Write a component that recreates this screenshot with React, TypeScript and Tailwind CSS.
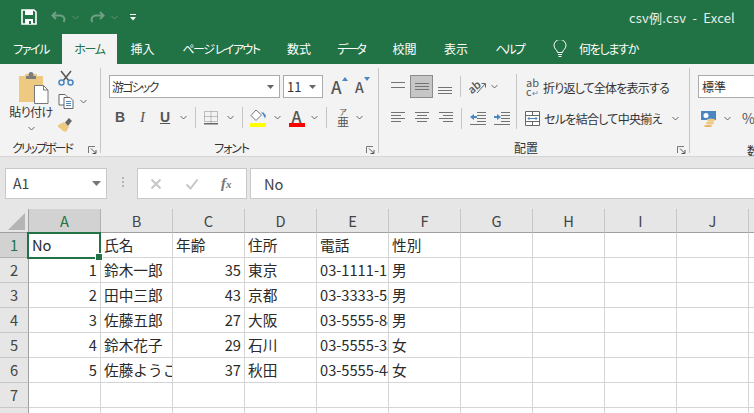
import React from "react";

const G = "#737373";
const B = "#4a86c0";

function Chev({ color = "#666", className = "" }: { color?: string; className?: string }) {
  return (
    <svg width="7" height="5" viewBox="0 0 7 5" className={className}>
      <path d="M.5 1 3.5 4 6.5 1" fill="none" stroke={color} strokeWidth="1" />
    </svg>
  );
}

function Launcher() {
  return (
    <svg width="9" height="8" viewBox="0 0 9 8">
      <path d="M.5 7V.5H7" fill="none" stroke="#777" />
      <path d="M3 2.5 7.5 7M8 4v3.5H4.5" fill="none" stroke="#555" />
    </svg>
  );
}

function Lines({ ys, xs }: { ys: number[]; xs: [number, number][] }) {
  return (
    <svg width="16" height="16" viewBox="0 0 16 16">
      {ys.map((y, i) => (
        <rect key={i} x={xs[i][0]} y={y} width={xs[i][1] - xs[i][0]} height="1" fill={G} />
      ))}
    </svg>
  );
}

function Sep({ className = "" }: { className?: string }) {
  return <div className={`w-px bg-[#c6c6c6] ${className}`} />;
}

function Group({ label, width, labelClass, children }: { label: string; width: string; labelClass: string; children: React.ReactNode }) {
  return (
    <div className={`${width} shrink-0 h-[85px] mt-[4px] flex flex-col border-r border-[#c6c6c6]`}>
      <div className="flex-1 min-h-0">{children}</div>
      <div className={`relative h-[17px] pt-[6px] flex items-center ${labelClass} text-[12px] text-[#333]`}>
        {label}
        <span className="absolute right-[3px] top-[10px] flex">
          <Launcher />
        </span>
      </div>
    </div>
  );
}

const tabs: [string, string, string][] = [
  ["ファイル", "w-[62px]", "tracking-[-1.5px]"],
  ["ホーム", "w-[55px]", "tracking-[-1.3px]"],
  ["挿入", "w-[51px]", ""],
  ["ページ レイアウト", "w-[106px]", "tracking-[-1.5px]"],
  ["数式", "w-[50px]", ""],
  ["データ", "w-[54px]", "tracking-[-2px]"],
  ["校閲", "w-[53px]", ""],
  ["表示", "w-[50px]", ""],
  ["ヘルプ", "w-[57px]", "tracking-[-2px]"],
];

const cols = ["A", "B", "C", "D", "E", "F", "G", "H", "I", "J", "K"];
const rows: (string | number)[][] = [
  ["No", "氏名", "年齢", "住所", "電話", "性別"],
  [1, "鈴木一郎", 35, "東京", "03-1111-1111", "男"],
  [2, "田中三郎", 43, "京都", "03-3333-5555", "男"],
  [3, "佐藤五郎", 27, "大阪", "03-5555-8888", "男"],
  [4, "鈴木花子", 29, "石川", "03-5555-3333", "女"],
  [5, "佐藤ようこ", 37, "秋田", "03-5555-4444", "女"],
  [],
  [],
];

export default function App() {
  return (
    <div className="w-[754px] h-[413px] overflow-hidden bg-white text-[12px] font-['Noto_Sans_CJK_JP','Noto_Sans',sans-serif] [font-feature-settings:'palt']">
      {/* Title bar */}
      <div className="h-[34px] bg-[#217346] flex items-center text-[#e6efe9]">
        <svg width="16" height="16" viewBox="0 0 16 16" className="ml-[21px]">
          <path d="M1 1h12l2 2v12H1z" fill="none" stroke="#fff" strokeWidth="1.6" />
          <rect x="4" y="1" width="8" height="5" fill="#fff" />
          <rect x="4" y="10" width="8" height="5" fill="#fff" />
          <rect x="8" y="12" width="2" height="3" fill="#217346" />
        </svg>
        <svg width="15" height="13" viewBox="0 0 15 13" className="ml-[14px]">
          <path d="M5 1 1.5 4.5 5 8M2 4.5h7a4 4 0 0 1 3.5 6.5" fill="none" stroke="#6f9f84" strokeWidth="2" />
        </svg>
        <Chev color="#5f9578" className="ml-[6px]" />
        <svg width="15" height="13" viewBox="0 0 15 13" className="ml-[11px]">
          <path d="M10 1l3.5 3.5L10 8M13 4.5H6A4 4 0 0 0 2.500 11" fill="none" stroke="#6f9f84" strokeWidth="2" />
        </svg>
        <Chev color="#5f9578" className="ml-[6px]" />
        <svg width="6" height="7" viewBox="0 0 6 7" className="ml-[12px]">
          <rect y="0" width="6" height="1" fill="#fff" />
          <path d="M0 3h6L3 6.500z" fill="#fff" />
        </svg>
        <span className="ml-auto mr-[19px] text-[13px] tracking-[0.2px] whitespace-pre leading-none">csv例.csv  -  Excel</span>
      </div>

      {/* Tabs */}
      <div className="h-[30px] bg-[#217346] flex items-stretch text-white">
        {tabs.map(([t, w, track]) => (
          <div key={t} className={`${w} ${track} shrink-0 flex items-center justify-center whitespace-pre ${t === "ホーム" ? "bg-[#f3f3f3] text-[#217346]" : ""}`}>
            {t}
          </div>
        ))}
        <div className="ml-[15px] flex items-center">
          <svg width="14" height="18" viewBox="0 0 14 18">
            <path d="M4.500 12.500C4.500 10 1 9 1 5.500a6 6 0 0 1 12 0C13 9 9.500 10 9.500 12.500zM5 14.500h4M5.500 16.500h3" fill="none" stroke="#fff" strokeWidth="1" />
          </svg>
          <span className="ml-[12px] tracking-[-1.3px]">何をしますか</span>
        </div>
      </div>

      {/* Ribbon */}
      <div className="h-[93px] bg-[#f3f3f3] border-b border-[#d5d5d5] flex overflow-hidden text-[#333]">
        {/* Clipboard */}
        <Group label="クリップボード" width="w-[101px]" labelClass="justify-start pl-[12px] tracking-[-2px]">
          <div className="flex">
            <div className="w-[56px] flex flex-col items-center pl-[6px] pt-[4px]">
              <svg width="30" height="32" viewBox="0 0 30 32" className="ml-[6px]">
                <path d="M0 4h6V2h12v2h6v26H0z" fill="#eec982" />
                <rect x="7" y="4" width="10" height="3" fill="#7d7d7d" />
                <circle cx="12" cy="2.500" r="2.500" fill="#7d7d7d" />
                <path d="M15.500 13.500h9l4.500 4.500v13.500H15.500z" fill="#fff" stroke="#777" />
                <path d="M24.500 13.500V18H29" fill="none" stroke="#777" />
              </svg>
              <span className="mt-0 text-[12px] leading-[16px] whitespace-nowrap tracking-[-0.5px]">貼り付け</span>
              <Chev className="mt-[6px]" />
            </div>
            <div className="flex flex-col pt-[2px] pl-[2px]">
              <svg width="16" height="16" viewBox="0 0 16 16">
                <path d="M3 1l8 10M13 1 5 11" fill="none" stroke="#555" strokeWidth="1.500" />
                <circle cx="3.500" cy="12.500" r="2.500" fill="none" stroke={B} strokeWidth="1.500" />
                <circle cx="12.500" cy="12.500" r="2.500" fill="none" stroke={B} strokeWidth="1.500" />
              </svg>
              <div className="flex items-center mt-[8px]">
                <svg width="16" height="15" viewBox="0 0 16 15">
                  <path d="M1 .5h6l2 2V11H1z" fill="#fff" stroke="#666" />
                  <path d="M6 3.500h6l3 3v8H6z" fill="#fff" stroke="#666" />
                  <path d="M8 7.500h5M8 9.500h5M8 11.500h5" stroke={B} />
                </svg>
                <Chev className="ml-[6px]" />
              </div>
              <svg width="16" height="15" viewBox="0 0 16 15" className="mt-[8px]">
                <path d="M0 8l6-3 5 5-3 5-3-1-2-2-3-2z" fill="#eec982" />
                <path d="M7 5.500 10 2l1-1 3 3-1 1-3 4z" fill="#666" />
              </svg>
            </div>
          </div>
        </Group>

        {/* Font */}
        <Group label="フォント" width="w-[278px]" labelClass="justify-center pr-[16px] tracking-[-1.2px]">
          <div className="pl-[8px] pt-[7px] flex flex-col">
            <div className="flex items-center h-[23px]">
              <div className="w-[171px] h-[23px] bg-white border border-[#ababab] flex items-center pl-[2px] pr-[5px]">
                <span className="flex-1 tracking-[-1.8px]">游ゴシック</span>
                <svg width="7" height="4" viewBox="0 0 7 4"><path d="M0 0h7L3.500 4z" fill="#666" /></svg>
              </div>
              <div className="w-[40px] h-[23px] ml-[3px] bg-white border border-[#ababab] flex items-center pl-[3px] pr-[6px] text-[13px]">
                <span className="flex-1">11</span>
                <svg width="7" height="4" viewBox="0 0 7 4"><path d="M0 0h7L3.500 4z" fill="#666" /></svg>
              </div>
              <span className="relative ml-[8px] w-[24px] text-[17px] leading-none font-medium text-[#555]">
                A
                <svg width="6" height="4" viewBox="0 0 6 4" className="absolute left-[11px] top-[-1px]"><path d="M0 4h6L3 0z" fill={B} /></svg>
              </span>
              <span className="relative w-[20px] text-[14px] leading-none font-medium text-[#555]">
                A
                <svg width="6" height="4" viewBox="0 0 6 4" className="absolute left-[9px] top-[-3px]"><path d="M0 0h6L3 4z" fill={B} /></svg>
              </span>
            </div>
            <div className="flex items-center h-[21px] mt-[9px]">
              <span className="w-[11px] ml-[6px] text-[14px] font-bold text-[#555] [font-family:'Liberation_Sans',sans-serif]">B</span>
              <span className="w-[11px] ml-[14px] text-[15px] italic text-[#555] [font-family:'Liberation_Serif',serif]">I</span>
              <span className="w-[11px] ml-[9px] text-[14px] font-bold underline text-[#555] [font-family:'Liberation_Sans',sans-serif]">U</span>
              <Chev className="ml-[9px]" />
              <Sep className="h-[21px] ml-[8px]" />
              <svg width="14" height="14" viewBox="0 0 14 14" className="ml-[8px]">
                <path d="M.5.500h13v10H.5zM7 .500v12M.5 5.500h13" fill="none" stroke="#888" strokeDasharray="1 1" />
                <rect y="12" width="14" height="1.500" fill="#666" />
              </svg>
              <Chev className="ml-[9px]" />
              <Sep className="h-[21px] ml-[8px]" />
              <div className="ml-[7px] w-[17px] flex flex-col">
                <svg width="17" height="13" viewBox="0 0 17 13">
                  <path d="M6 1 1 6.500l5 5 5.500-5.500z" fill="#fff" stroke="#777" />
                  <path d="M11 3.500h2.500l2.500 3-1 3-2-4z" fill={B} />
                </svg>
                <div className="h-[4px] w-[16px] bg-[#ffff00] mt-[1px]" />
              </div>
              <Chev className="ml-[7px]" />
              <div className="ml-[7px] w-[17px] flex flex-col items-center">
                <span className="text-[16px] leading-[14px] font-medium text-[#555]">A</span>
                <div className="h-[4px] w-[16px] bg-[#ff0000]" />
              </div>
              <Chev className="ml-[6px]" />
              <Sep className="h-[21px] ml-[8px]" />
              <div className="ml-[10px] w-[12px] flex flex-col items-center leading-none text-[#555]">
                <span className="text-[8px] leading-[8px]">ア</span>
                <span className="text-[12px] leading-[11px]">亜</span>
              </div>
              <Chev className="ml-[7px]" />
            </div>
          </div>
        </Group>

        {/* Alignment */}
        <Group label="配置" width="w-[311px]" labelClass="justify-center pr-[16px]">
          <div className="flex h-full pt-[6px]">
            <div className="w-[138px] flex flex-col border-r border-[#c6c6c6] h-[55px]">
              <div className="flex items-center h-[23px] mt-[1px]">
                <span className="ml-[11px]"><Lines ys={[3, 8]} xs={[[1, 15], [1, 15]]} /></span>
                <span className="ml-[4px] w-[23px] h-[23px] bg-[#c6c6c6] border border-[#8c8c8c] flex items-center justify-center">
                  <Lines ys={[4, 7, 10]} xs={[[1, 15], [1, 15], [1, 15]]} />
                </span>
                <span className="ml-[4px] mt-[3px]"><Lines ys={[7, 10, 13]} xs={[[1, 15], [1, 15], [1, 15]]} /></span>
                <Sep className="h-[21px] ml-[7px]" />
                <svg width="18" height="16" viewBox="0 0 18 16" className="ml-[8px]">
                  <text x="0" y="12" fontSize="11" fontWeight="500" fill="#555" transform="rotate(-40 6 10)">ab</text>
                  <path d="M8 14 16 5M12.500 4.500H16.500V8.500" fill="none" stroke="#666" />
                </svg>
                <Chev className="ml-[4px]" />
              </div>
              <div className="flex items-center h-[22px] mt-[9px]">
                <span className="ml-[11px]"><Lines ys={[2, 5, 8, 11]} xs={[[1, 15], [1, 11], [1, 15], [1, 11]]} /></span>
                <span className="ml-[8px]"><Lines ys={[2, 5, 8, 11]} xs={[[1, 15], [3, 13], [1, 15], [3, 13]]} /></span>
                <span className="ml-[8px]"><Lines ys={[2, 5, 8, 11]} xs={[[1, 15], [5, 15], [1, 15], [5, 15]]} /></span>
                <Sep className="h-[21px] ml-[7px]" />
                <svg width="16" height="14" viewBox="0 0 16 14" className="ml-[8px]">
                  <path d="M7 1.500h9M7 4.500h9M7 7.500h9M7 10.500h9M0 13.500h16" stroke={G} />
                  <path d="M0 6l4-3v2h3v2H4v2z" fill={B} />
                </svg>
                <svg width="16" height="14" viewBox="0 0 16 14" className="ml-[8px]">
                  <path d="M7 1.500h9M7 4.500h9M7 7.500h9M7 10.500h9M0 13.500h16" stroke={G} />
                  <path d="M7 6 3 3v2H0v2h3v2z" fill={B} />
                </svg>
              </div>
            </div>
            <div className="flex flex-col pl-[8px] pt-[2px] flex-1">
              <div className="flex items-center h-[23px]">
                <span className="w-[17px] pl-[1px] text-[11px] leading-[9px] text-[#555]">ab<br />c<span className="text-[#4a86c0] text-[8px]">↵</span></span>
                <span className="ml-[1px] whitespace-nowrap tracking-[-0.8px]">折り返して全体を表示する</span>
              </div>
              <div className="flex items-center h-[23px] mt-[8px]">
                <svg width="15" height="15" viewBox="0 0 15 15">
                  <path d="M.5.500h14v14H.5zM.5 4.500h14M.5 10.500h14M7.500.500v4M7.500 10.500v4" fill="#fff" stroke="#666" />
                  <path d="M3 7.500h9M4.500 6 3 7.500 4.500 9M10.500 6 12 7.500 10.500 9" fill="none" stroke={B} />
                </svg>
                <span className="ml-[4px] whitespace-nowrap tracking-[-0.7px]">セルを結合して中央揃え</span>
                <Chev className="ml-[10px]" />
              </div>
            </div>
          </div>
        </Group>

        {/* Number */}
        <div className="w-[65px] shrink-0 h-[85px] mt-[4px] flex flex-col pl-[8px] pt-[7px]">
          <div className="w-[80px] h-[23px] shrink-0 bg-white border border-[#ababab] flex items-center pl-[3px]">標準</div>
          <div className="flex items-center h-[21px] mt-[10px] shrink-0">
            <svg width="16" height="16" viewBox="0 0 16 16" className="ml-[3px]">
              <rect x="0" y="0" width="15" height="9" fill={B} />
              <circle cx="5" cy="4.500" r="2.500" fill="#fff" />
              <ellipse cx="10" cy="9" rx="4" ry="1.500" fill="#eec982" />
              <ellipse cx="9" cy="12" rx="4" ry="1.500" fill="#eec982" />
              <ellipse cx="7" cy="15" rx="4" ry="1" fill="#e8b45c" />
            </svg>
            <Chev className="ml-[7px]" />
            <span className="ml-[11px] text-[14px] text-[#555] whitespace-nowrap">%</span>
          </div>
          <div className="pl-[49px] mt-[13px] text-[12px] whitespace-nowrap">数値</div>
        </div>
      </div>

      {/* Formula bar */}
      <div className="h-[52px] bg-[#e6e6e6] flex items-start pt-[11px] text-[#444]">
        <div className="w-[102px] h-[31px] ml-[5px] bg-white border border-[#c8c8c8] flex items-center pl-[7px] pr-[5px] text-[14px]">
          <span className="flex-1">A1</span>
          <svg width="9" height="5" viewBox="0 0 9 5"><path d="M0 0h9L4.500 5z" fill="#777" /></svg>
        </div>
        <div className="ml-[15px] mt-[9px] flex flex-col gap-[2px]">
          <i className="block w-[2px] h-[2px] bg-[#b5b5b5]" />
          <i className="block w-[2px] h-[2px] bg-[#b5b5b5]" />
          <i className="block w-[2px] h-[2px] bg-[#b5b5b5]" />
        </div>
        <div className="w-[110px] h-[31px] ml-[13px] bg-white border border-[#c8c8c8] flex items-center">
          <svg width="12" height="12" viewBox="0 0 12 12" className="ml-[12px]">
            <path d="M1.500 1.500l9 9M10.500 1.500l-9 9" stroke="#c6c6c6" strokeWidth="2" />
          </svg>
          <svg width="14" height="12" viewBox="0 0 14 12" className="ml-[23px]">
            <path d="M1.500 6.500l4 4 7-9" fill="none" stroke="#c6c6c6" strokeWidth="2" />
          </svg>
          <span className="ml-[22px] text-[15px] italic font-bold text-[#777] [font-family:'Liberation_Serif',serif]">f<span className="text-[11px]">x</span></span>
        </div>
        <div className="flex-1 h-[31px] ml-[3px] bg-white border border-r-0 border-[#c8c8c8] flex items-center pl-[13px] text-[14.67px]">No</div>
      </div>

      {/* Sheet */}
      <div className="relative grid grid-cols-[29px_repeat(11,72px)] grid-rows-[24px_repeat(8,25px)] text-[14.67px] text-[#2a2a2a] [font-feature-settings:normal]">
        <div className="bg-[#e6e6e6] border-r border-b border-[#a0a0a0] flex items-end justify-end pr-[3px] pb-[2px]">
          <svg width="17" height="17" viewBox="0 0 17 17"><path d="M17 0v17H0z" fill="#b5b5b5" /></svg>
        </div>
        {cols.map((c, i) => (
          <div key={c} className={`border-b border-r flex items-center justify-center text-[14.67px] ${i === 0 ? "bg-[#d2d2d2] text-[#217346] border-b-[#217346] border-r-[#b0b0b0]" : "bg-[#e6e6e6] text-[#444] border-b-[#a0a0a0] border-r-[#c6c6c6]"}`}>
            {c}
          </div>
        ))}
        {rows.map((r, ri) => (
          <React.Fragment key={ri}>
            <div className={`border-r border-b border-r-[#a0a0a0] flex items-center justify-center ${ri === 0 ? "bg-[#d2d2d2] text-[#217346] border-b-[#b0b0b0]" : "bg-[#e6e6e6] text-[#444] border-b-[#c6c6c6]"}`}>
              {ri + 1}
            </div>
            {cols.map((_, ci) => {
              const v = r[ci];
              return (
                <div key={ci} className={`border-r border-b border-[#d4d4d4] overflow-hidden whitespace-nowrap flex items-center px-[3px] ${typeof v === "number" ? "justify-end" : "justify-start"}`}>
                  {v}
                </div>
              );
            })}
          </React.Fragment>
        ))}
        {/* Selection */}
        <div className="absolute left-[27px] top-[23px] w-[74px] h-[27px] border-2 border-[#217346] pointer-events-none">
          <div className="absolute right-[-4px] bottom-[-4px] w-[6px] h-[6px] bg-[#217346] border border-white box-content" />
        </div>
      </div>
    </div>
  );
}
